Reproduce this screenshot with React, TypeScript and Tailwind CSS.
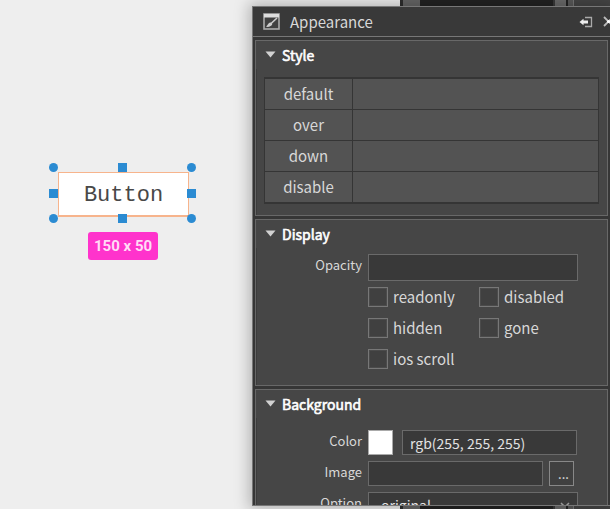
import type { ReactNode } from "react";

function Section({ title, className, children }: { title: string; className: string; children: ReactNode }) {
  return (
    <section className={`flex flex-col border border-[#686868] bg-[#464646] ${className}`}>
      <h2 className="flex h-7 shrink-0 items-start gap-1.5 pl-[9px] pt-0.5 text-[14px] font-normal leading-6 text-white [-webkit-text-stroke:0.6px_white]">
        <svg width="11" height="7" viewBox="0 0 11 7" className="mt-2 shrink-0">
          <path d="M0.5 0.5H10.5L5.5 6.5Z" fill="#d2d2d2" />
        </svg>
        {title}
      </h2>
      <div className="flex-1 border-l border-[#3c3c3c]">{children}</div>
    </section>
  );
}

function Check({ label }: { label: string }) {
  return (
    <label className="flex h-[31px] items-center gap-[5px]">
      <input
        type="checkbox"
        className="size-5 shrink-0 appearance-none border border-[#777] bg-[#404040] shadow-[inset_0_0_0_1px_#4b4b4b] checked:bg-[#2a8ad4]"
      />
      {label}
    </label>
  );
}

const field = "min-w-0 border border-[#6a6a6a] bg-[#393939] text-[#e2e2e2] outline-none";
const rowLabel = "w-[106px] shrink-0 pr-px text-right text-[13px] leading-[22px]";
const handle = "absolute size-[9px] bg-[#2b8bd2]";

export default function App() {
  return (
    <div className="relative flex h-screen w-full overflow-hidden bg-[#eeeeee] font-['Noto_Sans_CJK_SC',sans-serif] text-[15px] text-[#d8d8d8]">
      <main className="w-[400px] shrink-0">
        <div className="absolute left-[58px] top-[172px]">
          <button className="h-[45px] w-[131px] border border-b-2 border-[#f7b48c] bg-white pt-1 font-['Liberation_Mono',monospace] text-[22px] leading-6 text-[#484848]">
            Button
          </button>
          <span className={`${handle} -left-[9px] -top-[9px] rounded-full`} />
          <span className={`${handle} left-[60px] -top-[9px]`} />
          <span className={`${handle} left-[129px] -top-[9px] rounded-full`} />
          <span className={`${handle} -left-[9px] top-[17px]`} />
          <span className={`${handle} left-[129px] top-[17px]`} />
          <span className={`${handle} -left-[9px] top-[42px] rounded-full`} />
          <span className={`${handle} left-[60px] top-[42px]`} />
          <span className={`${handle} left-[129px] top-[42px] rounded-full`} />
        </div>
        <div className="absolute left-[88px] top-[232px] flex h-7 items-center rounded-[3px] bg-[#ff33cc] px-1.5 font-['Roboto',sans-serif] text-[15px] font-bold leading-5 text-[#ffdcf6]">
          150 x 50
        </div>
      </main>

      <div className="flex flex-1 bg-[#232323]">
        <div className="w-[3px] bg-[#2e2e2e]" />
        <div className="w-[17px] bg-[#666]" />
        <div className="ml-[133px] w-[13px] border-l-2 border-[#3a3a3a] bg-[#6b6b6b]" />
        <div className="ml-0.5 w-[5px] bg-[#5a5a5a]" />
        <div className="flex-1 border-l border-[#777] bg-[#464646]" />
      </div>

      <aside className="absolute -right-px bottom-[3px] left-[252px] top-1.5 flex flex-col overflow-hidden border border-[#777] bg-[#363636] shadow-[0_0_14px_3px_rgba(0,0,0,0.25)]">
        <header className="flex h-[30px] shrink-0 items-center border-b border-[#777] bg-[#393939] pl-2.5">
          <svg width="17" height="17" viewBox="0 0 17 17">
            <rect x="1" y="1" width="15" height="15" fill="#404040" stroke="#aaa" strokeWidth="1.6" />
            <path d="M1 1H16V4.5H1Z" fill="#ddd" />
            <path d="M14 5L7 11.5" stroke="#ccc" strokeWidth="1.6" />
            <path d="M8 9.5C5.5 9.5 5 11.5 3 13.8C6 14.3 9 13 9.3 11Z" fill="#ccc" />
          </svg>
          <h1 className="ml-2.5 flex-1 leading-6">Appearance</h1>
          <button aria-label="Dock panel" className="mr-2.5">
            <svg width="14" height="12" viewBox="0 0 14 12" fill="none">
              <path d="M6 1.5H12.5V10.5H6" stroke="#aaa" strokeWidth="1.3" />
              <path d="M0.5 6L4.5 2.8V4.4H9V7.6H4.5V9.2Z" fill="#eee" />
            </svg>
          </button>
          <button aria-label="Close panel" className="-mr-1">
            <svg width="11" height="11" viewBox="0 0 11 11">
              <path d="M1 1L10 10M10 1L1 10" stroke="#bbb" strokeWidth="1.8" />
              <circle cx="5.5" cy="5.5" r="1.6" fill="#fff" />
            </svg>
          </button>
        </header>

        <div className="flex flex-1 flex-col gap-[3px] overflow-hidden px-0.5 pt-[3px]">
          <Section title="Style" className="h-44 shrink-0">
            <div className="pl-[7px] pr-2 pt-2">
              <div className="border border-t-2 border-[#353535] bg-[#535353]">
                <table className="w-full table-fixed border-separate border-spacing-0 text-center leading-6">
                  <tbody>
                    {["default", "over", "down", "disable"].map((state) => (
                      <tr key={state} className="h-[31px]">
                        <th scope="row" className="w-[88px] border-b border-r border-[#353535] p-0 font-normal">
                          {state}
                        </th>
                        <td className="border-b border-[#353535] p-0" />
                      </tr>
                    ))}
                  </tbody>
                </table>
              </div>
            </div>
          </Section>

          <Section title="Display" className="h-[167px] shrink-0">
            <div className="flex gap-[5px] pt-1.5">
              <label htmlFor="opacity" className={rowLabel}>
                Opacity
              </label>
              <input id="opacity" className={`${field} h-[27px] w-[210px] px-2`} />
            </div>
            <div className="ml-[111px] grid grid-cols-[111px_auto] leading-6">
              <Check label="readonly" />
              <Check label="disabled" />
              <Check label="hidden" />
              <Check label="gone" />
              <Check label="ios scroll" />
            </div>
          </Section>

          <Section title="Background" className="shrink-0">
            <div className="flex flex-col gap-1.5 pb-3 pt-3">
              <div className="flex gap-[5px]">
                <label htmlFor="color" className={rowLabel}>
                  Color
                </label>
                <button aria-label="Pick color" className="size-[25px] border border-[#aaa] bg-white" />
                <input
                  id="color"
                  defaultValue="rgb(255, 255, 255)"
                  className={`${field} ml-1 h-[25px] w-[175px] px-[7px] text-[14px]`}
                />
              </div>
              <div className="flex gap-[5px]">
                <label htmlFor="image" className={rowLabel}>
                  Image
                </label>
                <input id="image" className={`${field} h-[25px] w-[175px] px-[7px] text-[14px]`} />
                <button className="ml-px size-[25px] border border-[#888] bg-[#404040] pl-1 text-[13px] leading-6 text-[#e2e2e2]">
                  ...
                </button>
              </div>
              <div className="flex gap-[5px]">
                <label htmlFor="option" className={rowLabel}>
                  Option
                </label>
                <div className="relative">
                  <select id="option" className={`${field} h-[25px] w-[210px] appearance-none px-3 text-[14px] leading-5`}>
                    <option>original</option>
                  </select>
                  <svg width="10" height="6" viewBox="0 0 10 6" fill="none" className="pointer-events-none absolute right-2 top-2.5">
                    <path d="M1 1L5 5L9 1" stroke="#999" strokeWidth="1.5" />
                  </svg>
                </div>
              </div>
            </div>
          </Section>
        </div>
      </aside>
    </div>
  );
}
